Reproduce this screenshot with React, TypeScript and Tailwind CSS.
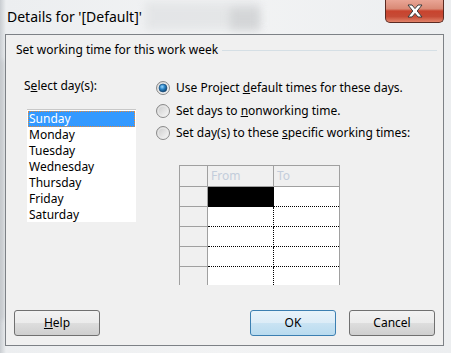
import React from "react";

const font = { fontFamily: '"Noto Sans", "Open Sans", sans-serif' };

function Radio({ checked }: { checked?: boolean }) {
  return (
    <svg width="14" height="14" viewBox="0 0 14 14" className="shrink-0">
      <defs>
        <linearGradient id="rbg" x1="0" y1="0" x2="1" y2="1">
          <stop offset="0" stopColor="#c8c8c8" />
          <stop offset="1" stopColor="#fbfbfb" />
        </linearGradient>
        <radialGradient id="rdot" cx="0.4" cy="0.35" r="0.7">
          <stop offset="0" stopColor="#9ad8ff" />
          <stop offset="0.45" stopColor="#2a84c6" />
          <stop offset="1" stopColor="#0d3a64" />
        </radialGradient>
      </defs>
      <circle cx="7" cy="7" r="6.5" fill="url(#rbg)" stroke="#8a8a8a" strokeWidth="1" />
      <circle cx="7" cy="7" r="5" fill="none" stroke="#ececec" strokeWidth="0.8" />
      {checked && <circle cx="7" cy="7" r="4" fill="url(#rdot)" stroke="#1b4f7a" strokeWidth="0.6" />}
    </svg>
  );
}

function Btn({ children, def }: { children: React.ReactNode; def?: boolean }) {
  return (
    <div
      className={
        "w-[86px] h-[26px] rounded-[3px] border flex items-center justify-center text-[12px] text-black " +
        (def
          ? "border-[#3c7fb1] bg-[linear-gradient(#e8f3fa_0%,#dcecf7_50%,#c9e3f3_51%,#b9dbef_100%)]"
          : "border-[#707070] bg-[linear-gradient(#f2f2f2_0%,#ebebeb_50%,#dddddd_51%,#cfcfcf_100%)]")
      }
    >
      {children}
    </div>
  );
}

const days = ["Sunday", "Monday", "Tuesday", "Wednesday", "Thursday", "Friday", "Saturday"];

export default function App() {
  return (
    <div
      className="w-[451px] h-[353px] relative overflow-hidden bg-[linear-gradient(90deg,#c9cdd1_0px,#eceef0_6px,#f2f3f4_50%,#eceef0_100%)]"
      style={font}
    >
      {/* blurred glass background hints */}
      <div className="absolute left-[145px] top-[2px] w-[115px] h-[28px] bg-[#dcdee0] blur-[4px] opacity-60" />
      <div className="absolute left-[230px] top-[8px] w-[30px] h-[22px] bg-[#c9cbcd] blur-[4px] opacity-60" />
      <div className="absolute left-[0px] top-[60px] w-[4px] h-[260px] bg-[#b9bdc1] blur-[2px] opacity-60" />

      {/* title bar */}
      <div className="relative h-[34px] flex items-start">
        <div className="pl-[7px] pt-[7px] text-[14px] leading-[20px] text-black">Details for '[Default]'</div>
        <div className="ml-auto mr-[7px] w-[59px] h-[23px] rounded-b-[5px] border border-t-0 border-[#5a2a22] bg-[linear-gradient(#e9a595_0%,#d98a76_40%,#c8432e_50%,#c64b36_75%,#e2836a_100%)] flex items-center justify-center">
          <svg width="18" height="14" viewBox="0 0 18 14">
            <path
              d="M2 1 H6 L9 4.6 L12 1 H16 L11.2 7 L16 13 H12 L9 9.4 L6 13 H2 L6.8 7 Z"
              fill="#ffffff"
              stroke="#3b3b3b"
              strokeWidth="1"
              strokeLinejoin="round"
            />
          </svg>
        </div>
      </div>

      {/* client area */}
      <div className="relative ml-[5px] w-[439px] h-[312px] border border-[#7d8186] bg-[#f0f0f0] flex flex-col text-[12px] text-black">
        {/* section header */}
        <div className="mt-[7px] pl-[10px] pr-[6px] h-[16px] flex items-center">
          <span className="leading-[16px] whitespace-nowrap">Set working time for this work week</span>
          <div className="ml-[4px] flex-1 h-[1px] bg-[#d5dfe5]" />
        </div>

        <div className="mt-[19px] flex">
          {/* left column */}
          <div className="w-[150px] pl-[18px] flex flex-col">
            <div className="mt-[1px] h-[16px] leading-[16px]">
              S<span className="underline">e</span>lect day(s):
            </div>
            <div className="mt-[15px] ml-[3px] w-[109px] h-[113px] bg-white border-t border-[#c8c8c8] pt-[1px] px-[1px]">
              {days.map((d, i) => (
                <div
                  key={d}
                  className={
                    "h-[16px] leading-[16px] pl-[1px] " +
                    (i === 0 ? "bg-[#3399ff] text-white outline outline-1 outline-dotted outline-[#e38a3c] -outline-offset-1" : "")
                  }
                >
                  {d}
                </div>
              ))}
            </div>
          </div>

          {/* right column */}
          <div className="flex flex-col">
            <div className="h-[22px] flex items-center gap-[6px]">
              <Radio checked />
              <span>
                Use Project <span className="underline">d</span>efault times for these days.
              </span>
            </div>
            <div className="h-[23px] flex items-center gap-[6px]">
              <Radio />
              <span>
                Set days to <span className="underline">n</span>onworking time.
              </span>
            </div>
            <div className="h-[22px] flex items-center gap-[6px]">
              <Radio />
              <span>
                Set day(s) to these <span className="underline">s</span>pecific working times:
              </span>
            </div>

            {/* grid */}
            <div className="mt-[21px] ml-[23px] w-[161px] h-[120px] overflow-hidden border-l border-r border-t border-[#a0a0a0] bg-white">
              <div className="flex h-[21px] border-b border-[#a0a0a0] bg-[#f0f0f0]">
                <div className="w-[28px] border-r border-[#a0a0a0]" />
                <div className="w-[66px] border-r border-[#a0a0a0] pl-[3px] leading-[20px] text-[#c3cddb]">From</div>
                <div className="flex-1 pl-[3px] leading-[20px] text-[#c3cddb]">To</div>
              </div>
              {[0, 1, 2, 3, 4].map((r) => (
                <div key={r} className="flex h-[20px]">
                  <div className="w-[28px] border-r border-b border-[#a0a0a0] bg-[#f0f0f0]" />
                  <div
                    className={
                      "w-[66px] border-r border-b border-dotted border-black " + (r === 0 ? "bg-black" : "bg-white")
                    }
                  />
                  <div className="flex-1 border-b border-dotted border-black bg-white" />
                </div>
              ))}
            </div>
          </div>
        </div>

        {/* buttons */}
        <div className="mt-auto mb-[9px] flex pl-[8px] pr-[8px]">
          <Btn>
            <span className="underline">H</span>elp
          </Btn>
          <div className="ml-auto flex gap-[13px]">
            <Btn def>OK</Btn>
            <Btn>Cancel</Btn>
          </div>
        </div>
      </div>
    </div>
  );
}
